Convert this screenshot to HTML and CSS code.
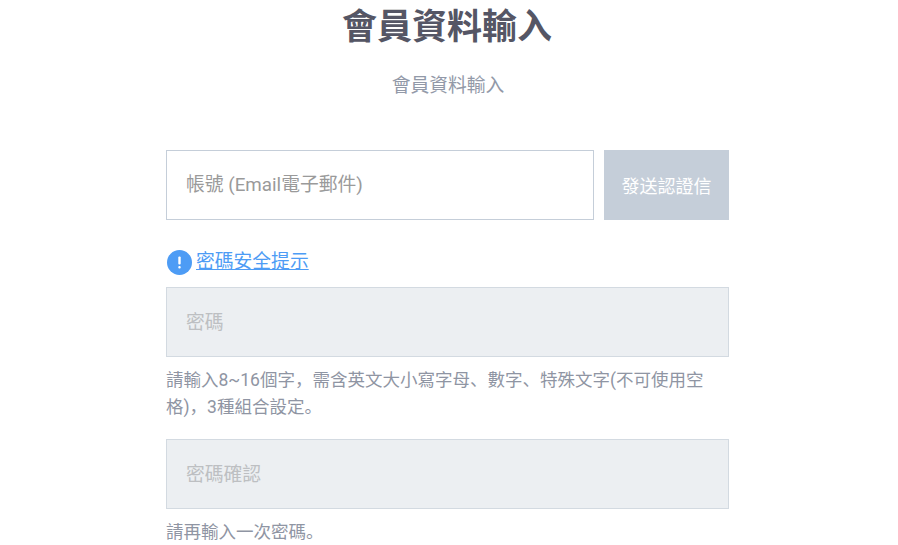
FILE: index.html
```
<!DOCTYPE html>
<html>
<head>
<meta charset="utf-8">
<title>會員資料輸入</title>
<link rel="stylesheet" href="styles.css">
</head>
<body>
<h1 class="title">會員資料輸入</h1>
<p class="subtitle">會員資料輸入</p>
<form class="form">
  <div class="account-row">
    <input class="field account" type="text" placeholder="帳號 (Email電子郵件)">
    <button class="send" type="button">發送認證信</button>
  </div>
  <div class="hint-row">
    <svg class="info" width="25" height="25" viewBox="0 0 25 25"><circle cx="12.5" cy="12.5" r="12.5" fill="#4d9cf5"/><rect x="11.3" y="6.5" width="2.4" height="8" rx="1" fill="#fff"/><rect x="11.3" y="16" width="2.4" height="2.4" rx="1" fill="#fff"/></svg>
    <a class="hint-link" href="#">密碼安全提示</a>
  </div>
  <input class="field disabled" type="password" placeholder="密碼" disabled>
  <p class="help">請輸入8~16個字，需含英文大小寫字母、數字、特殊文字(不可使用空格)，3種組合設定。</p>
  <input class="field disabled second" type="password" placeholder="密碼確認" disabled>
  <p class="help">請再輸入一次密碼。</p>
</form>
</body>
</html>
```
FILE: styles.css
```
html, body { margin: 0; padding: 0; height: 545px; overflow: hidden; background: #fff; }
body { font-family: Roboto, "Noto Sans CJK SC", sans-serif; }
.title { margin: 0; padding: 5px 4px 0 0; height: 46px; line-height: 46px; text-align: center; font-size: 35px; font-weight: 700; color: #555665; }
.subtitle { margin: 20px 0 0; padding-right: 2px; height: 30px; line-height: 30px; text-align: center; font-size: 18.8px; color: #9299a8; }
.form { width: 563px; margin: 49px 0 0 166px; }
.account-row { display: flex; gap: 10px; }
.field { display: block; box-sizing: border-box; height: 70px; padding: 0 19px; font: 18.8px Roboto, "Noto Sans CJK SC", sans-serif; border: 1px solid #c5ced9; border-radius: 0; outline: none; background: #fff; }
.field::placeholder { color: #9a9a9a; opacity: 1; }
.account { width: 428px; }
.send { width: 125px; height: 70px; border: 0; padding: 0; background: #c5ced9; color: #fff; font: 18px Roboto, "Noto Sans CJK SC", sans-serif; }
.hint-row { display: flex; align-items: center; gap: 4px; height: 26px; margin-top: 29px; padding-left: 1px; }
.hint-link { color: #4d9cf5; font-size: 18.8px; line-height: 26px; text-decoration: underline; }
.disabled { width: 563px; margin-top: 12px; padding-top: 2px; background: #eceff2; border-color: #d3dae1; }
.disabled::placeholder { color: #bdbfc2; }
.help { margin: 10px 0 0; font-size: 17.5px; line-height: 27px; color: #8f95a3; }
.second { margin-top: 18px; }
```
